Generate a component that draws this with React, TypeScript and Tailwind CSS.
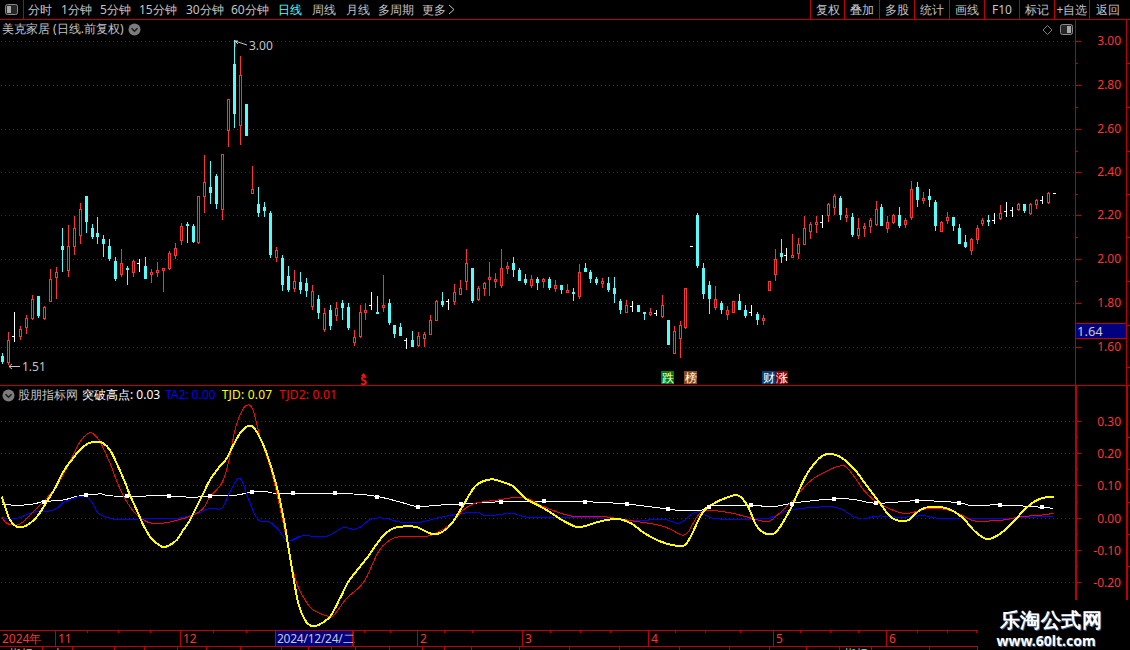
import React from "react";

type C = [number, number, number, number, number, "r" | "c" | "w"];

const candles: C[] = [
  [2,353,364,356,362,"c"],[8,332,365,340,363,"r"],[14,312,342,336,0,"w"],[20,326,340,329,337,"r"],[26,315,334,318,328,"r"],
  [32,295,320,299,319,"r"],[38,296,318,296,316,"c"],[44,306,320,307,319,"r"],[50,269,302,279,302,"r"],[56,267,299,272,278,"r"],
  [62,228,272,246,250,"c"],[68,225,277,246,271,"r"],[74,216,255,228,247,"r"],[80,203,244,209,236,"r"],[86,196,233,196,222,"c"],
  [92,224,239,228,237,"c"],[97,217,244,233,237,"c"],[103,235,257,239,244,"c"],[109,239,261,246,259,"c"],[115,257,281,261,279,"c"],
  [121,249,277,263,275,"r"],[127,266,285,268,270,"c"],[133,260,277,261,273,"r"],[139,259,272,263,0,"w"],[145,257,279,266,279,"c"],
  [151,269,283,272,275,"r"],[157,262,277,270,273,"r"],[163,268,292,268,271,"r"],[169,251,270,253,269,"r"],[175,243,259,248,256,"r"],
  [181,223,245,226,241,"r"],[187,222,243,224,226,"c"],[193,224,243,226,242,"c"],[198,196,244,196,243,"r"],[204,155,213,182,197,"r"],
  [210,161,204,187,193,"c"],[216,174,209,176,204,"c"],[222,154,220,154,210,"r"],[228,99,147,99,131,"r"],[234,40,128,64,114,"c"],
  [240,56,145,75,126,"r"],[246,104,136,104,136,"c"],[252,166,194,189,194,"r"],[258,187,217,204,213,"c"],[264,202,217,207,211,"c"],
  [270,211,258,213,255,"c"],[276,247,262,250,258,"r"],[282,255,291,258,285,"c"],[288,266,292,276,290,"c"],[294,270,292,281,289,"r"],
  [300,272,294,282,290,"c"],[306,278,297,283,291,"c"],[312,285,310,291,307,"r"],[318,295,319,299,313,"c"],[324,308,332,313,330,"r"],
  [330,305,330,310,326,"c"],[336,302,321,308,316,"r"],[342,300,320,303,308,"c"],[348,303,330,307,328,"c"],[354,330,346,337,343,"r"],
  [360,305,338,312,337,"r"],[365,303,320,310,313,"r"],[371,292,310,305,0,"w"],[377,296,314,312,314,"c"],[383,275,312,305,308,"r"],
  [389,299,325,303,323,"c"],[394,325,338,325,334,"c"],[400,323,336,327,336,"c"],[406,338,349,340,0,"w"],[412,331,347,340,347,"c"],
  [418,332,347,336,346,"r"],[424,332,347,334,339,"r"],[430,315,335,320,335,"r"],[436,300,321,301,321,"r"],[442,292,307,301,305,"c"],
  [448,299,310,301,0,"w"],[454,284,305,292,302,"r"],[460,280,295,288,295,"r"],[466,249,290,263,282,"r"],[472,268,303,268,301,"c"],
  [478,286,301,288,300,"r"],[484,282,296,283,289,"r"],[489,262,296,277,280,"r"],[495,273,288,279,282,"r"],[501,249,288,268,286,"r"],
  [507,262,274,266,269,"r"],[513,257,277,263,270,"c"],[519,268,281,270,281,"c"],[525,274,285,279,283,"c"],[531,275,288,279,286,"r"],
  [537,277,290,279,283,"c"],[543,278,288,279,282,"r"],[549,277,290,279,288,"c"],[555,280,292,285,289,"r"],[561,285,294,285,290,"c"],
  [567,284,293,290,293,"r"],[573,288,301,292,294,"c"],[579,264,299,272,297,"r"],[585,263,272,268,272,"c"],[590,270,283,272,279,"c"],
  [596,277,285,279,283,"c"],[602,278,288,281,284,"r"],[608,277,292,283,290,"c"],[614,277,303,288,294,"c"],[620,299,314,301,310,"c"],
  [626,300,313,305,313,"r"],[632,301,312,306,0,"w"],[638,305,312,305,312,"c"],[644,312,320,312,314,"c"],[650,308,316,312,315,"r"],
  [656,310,316,313,0,"w"],[662,295,318,305,317,"r"],[668,320,345,320,345,"c"],[674,326,354,331,354,"r"],[680,321,358,325,339,"r"],
  [685,288,329,288,328,"r"],[697,213,268,215,266,"c"],[703,263,299,268,294,"c"],[709,281,314,285,299,"c"],[715,286,310,299,308,"r"],
  [721,301,314,303,310,"c"],[727,306,320,310,315,"r"],[733,301,313,301,313,"r"],[739,294,310,301,310,"c"],[745,305,318,310,316,"c"],
  [751,305,316,312,0,"w"],[757,312,325,314,320,"c"],[763,315,325,318,321,"r"],[769,281,291,281,291,"r"],[775,249,281,259,275,"r"],
  [781,239,263,253,257,"c"],[786,248,261,255,0,"w"],[792,234,258,255,258,"r"],[798,238,259,244,254,"r"],[804,216,245,228,245,"r"],
  [810,222,239,224,232,"r"],[816,216,233,222,225,"r"],[822,215,228,222,0,"w"],[828,203,222,204,216,"r"],[834,194,215,196,208,"r"],
  [840,196,220,198,215,"c"],[846,208,222,215,218,"r"],[852,213,237,217,235,"c"],[858,218,239,228,236,"r"],[864,223,237,226,229,"r"],
  [870,218,233,220,227,"r"],[876,201,226,209,225,"r"],[881,204,226,207,226,"c"],[887,216,233,222,229,"r"],[893,214,224,215,223,"r"],
  [899,207,228,215,226,"c"],[905,218,228,220,225,"r"],[911,181,220,189,218,"r"],[917,182,207,187,200,"c"],[923,192,204,198,201,"r"],
  [929,189,207,196,200,"c"],[935,200,231,202,226,"c"],[941,221,232,222,232,"r"],[947,212,224,217,221,"r"],[953,217,231,217,226,"c"],
  [959,224,244,228,244,"c"],[965,235,248,242,247,"c"],[971,238,255,239,251,"r"],[977,225,244,228,240,"r"],[982,218,226,220,224,"r"],
  [988,215,226,220,222,"c"],[994,213,224,220,0,"w"],[1000,205,220,213,219,"r"],[1006,202,217,211,0,"w"],[1012,207,217,210,0,"w"],
  [1018,203,211,204,210,"r"],[1024,204,213,204,211,"c"],[1030,203,215,204,214,"r"],[1036,199,209,200,205,"r"],[1042,196,204,200,0,"w"],
  [1048,192,204,193,203,"r"],
];

type P = [number, number];
const a = (pts: number[][]): P[] => pts.map(([x, y]) => [x / 3, 400 + y / 3]);
const b = (pts: number[][]): P[] => pts.map(([x, y]) => [360 + x / 2.178, 420 + y / 3]);

const yellow: P[] = [
  ...a([[5,290],[15,320],[30,360],[50,380],[70,380],[90,370],[115,345],[140,305],[165,265],[190,215],[215,180],[240,150],[265,130],[290,125],[310,130],[330,150],[350,190],[370,235],[390,285],[410,330],[430,375],[450,410],[470,430],[490,441],[510,435],[530,420],[550,390],[570,360],[590,320],[610,280],[630,240],[655,205],[680,175],[700,135],[720,100],[740,80],[755,78],[770,95],[790,135],[810,190],[830,260],[850,350],[865,440],[880,530],[895,610],[915,660],[935,678],[955,675],[990,650],[1020,595],[1045,545],[1060,525]]),
  ...b([[0,440],[20,405],[40,365],[60,335],[80,322],[120,320],[140,332],[160,343],[180,335],[200,310],[225,255],[250,200],[270,183],[290,178],[310,186],[335,200],[360,235],[400,265],[440,300],[470,320],[490,318],[520,305],[560,297],[590,310],[620,340],[650,362],[680,375],[705,377],[720,350],[745,280],[765,255],[800,232],[825,227],[845,260],[865,320],[890,343],[910,330],[940,260],[970,170],[1000,115],[1020,102],[1045,110],[1075,145],[1100,190],[1130,245],[1155,290],[1175,303],[1195,300],[1220,270],[1245,260],[1280,266],[1310,290],[1340,335],[1365,357],[1390,345],[1420,310],[1450,265],[1475,240],[1495,232],[1512,230]]),
];
const red: P[] = [
  ...a([[5,350],[20,370],[50,375],[70,365],[100,335],[130,305],[165,265],[200,205],[240,125],[265,100],[278,100],[300,125],[330,190],[355,255],[380,305],[410,345],[440,365],[460,370],[500,368],[540,358],[580,345],[610,325],[630,290],[665,250],[685,190],[705,90],[722,40],[740,16],[758,28],[780,110],[810,200],[830,280],[850,370],[870,470],[890,550],[915,600],[940,630],[990,650],[1010,635],[1040,595]]),
  ...b([[0,500],[15,470],[40,395],[60,365],[85,350],[140,350],[165,340],[195,315],[225,270],[250,250],[300,240],[340,232],[365,235],[400,260],[460,288],[530,290],[590,302],[650,315],[680,330],[700,345],[715,335],[745,275],[800,277],[840,290],[885,305],[905,290],[940,245],[975,190],[1000,165],[1045,138],[1065,150],[1100,215],[1130,250],[1185,280],[1240,265],[1280,270],[1310,285],[1340,303],[1400,300],[1440,290],[1480,286],[1510,280]]),
];
const blue: P[] = [
  ...a([[5,355],[50,355],[100,337],[140,335],[170,325],[190,307],[210,300],[235,290],[260,292],[275,305],[295,340],[330,355],[365,360],[410,357],[440,355],[530,355],[580,345],[630,325],[665,325],[690,275],[720,235],[750,310],[775,360],[810,367],[835,390],[865,423],[905,408],[965,410],[990,405],[1030,383],[1060,388]]),
  ...b([[0,322],[25,297],[55,295],[90,307],[130,307],[175,292],[235,278],[260,278],[275,288],[330,280],[365,292],[450,292],[540,295],[600,302],[660,298],[695,310],[720,285],[740,275],[775,296],[880,296],[900,290],[930,272],[990,262],[1040,263],[1075,290],[1095,297],[1130,288],[1180,292],[1225,287],[1260,295],[1340,295],[1400,296],[1510,288]]),
];
const white: P[] = [
  ...a([[5,313],[55,316],[100,312],[130,305],[190,300],[225,290],[260,285],[305,282],[340,288],[510,288],[575,292],[630,288],[710,285],[760,275],[800,275],[835,280],[1060,282]]),
  ...b([[0,223],[40,230],[85,245],[125,260],[165,256],[220,252],[310,245],[400,243],[490,245],[580,252],[670,267],[700,272],[745,270],[765,258],[850,256],[900,260],[940,250],[1000,240],[1035,237],[1075,238],[1125,250],[1215,242],[1305,248],[1330,256],[1395,255],[1487,262],[1510,266]]),
];
const squares: P[] = [
  ...a([[132,306],[259,285],[381,288],[508,288],[631,288],[757,276],[880,279],[1006,279]]),
  ...b([[38,230],[127,261],[219,252],[308,245],[400,243],[491,246],[581,252],[671,267],[760,262],[852,256],[941,252],[1033,237],[1124,250],[1214,243],[1305,249],[1394,255],[1486,261]]),
];

function smooth(p: P[]): string {
  let d = `M${p[0][0].toFixed(1)} ${p[0][1].toFixed(1)}`;
  for (let i = 0; i < p.length - 1; i++) {
    const p0 = p[Math.max(0, i - 1)], p1 = p[i], p2 = p[i + 1], p3 = p[Math.min(p.length - 1, i + 2)];
    const c1x = p1[0] + (p2[0] - p0[0]) / 6, c1y = p1[1] + (p2[1] - p0[1]) / 6;
    const c2x = p2[0] - (p3[0] - p1[0]) / 6, c2y = p2[1] - (p3[1] - p1[1]) / 6;
    d += `C${c1x.toFixed(1)} ${c1y.toFixed(1)} ${c2x.toFixed(1)} ${c2y.toFixed(1)} ${p2[0].toFixed(1)} ${p2[1].toFixed(1)}`;
  }
  return d;
}

const priceAxis: [string, number][] = [["3.00",41],["2.80",85],["2.60",129],["2.40",172],["2.20",215],["2.00",259],["1.80",303],["1.60",347]];
const indAxis: [string, number][] = [["0.30",421],["0.20",453],["0.10",485],["0.00",518],["-0.10",550],["-0.20",582]];

const CYAN = "#54fcfc", RED = "#ff3232";

const dotXs = Array.from({ length: 269 }, (_, i) => 1 + i * 4);

function Dots({ y }: { y: number }) {
  return <>{dotXs.map((x) => <rect key={x} x={x} y={y} width="1" height="1" fill="#a00000" />)}</>;
}

function Candle({ c }: { c: C }) {
  const [x, hi, lo, top, bot, t] = c;
  if (t === "w") {
    return (
      <g fill="#ffffff">
        <rect x={x} y={hi} width={1} height={lo - hi} />
        <rect x={x - 2} y={top} width={2} height={1} />
      </g>
    );
  }
  if (t === "c") {
    return (
      <g fill={CYAN}>
        <rect x={x} y={hi} width={1} height={lo - hi} />
        <rect x={x - 1} y={top} width={3} height={bot - top} />
      </g>
    );
  }
  return (
    <g>
      <rect x={x} y={hi} width={1} height={lo - hi} fill={RED} />
      <rect x={x - 0.5} y={top + 0.5} width={2} height={Math.max(1, bot - top - 1)} fill="#000" stroke={RED} strokeWidth={1} />
    </g>
  );
}

function CircleChevron() {
  return (
    <svg width="13" height="13" viewBox="0 0 13 13" className="shrink-0">
      <circle cx="6.5" cy="6.5" r="6" fill="#7c7c7c" />
      <path d="M3.5 5.2 L6.5 8.2 L9.5 5.2" fill="none" stroke="#1c1c1c" strokeWidth="1.6" />
    </svg>
  );
}

function PanelIcon({ side }: { side: "l" | "r" }) {
  return (
    <svg width="13" height="11" viewBox="0 0 13 11">
      <rect x="0.5" y="0.5" width="12" height="10" rx="2" fill="#262626" stroke="#8a8a8a" />
      <rect x={side === "l" ? 2 : 7} y="2" width="4" height="7" fill="#a8a8a8" />
    </svg>
  );
}

const periods: [string, string][] = [["分时","w-[33px]"],["1分钟","w-[39px]"],["5分钟","w-[39px]"],["15分钟","w-[47px]"],["30分钟","w-[45px]"],["60分钟","w-[47px]"],["日线","w-[34px] text-[#54fcfc]"],["周线","w-[34px]"],["月线","w-[32px]"],["多周期","w-[44px]"]];
const tools: [string, string][] = [["复权","w-[34px]"],["叠加","w-[35px]"],["多股","w-[35px]"],["统计","w-[35px]"],["画线","w-[35px]"],["F10","w-[35px]"],["标记","w-[35px]"],["+自选","w-[35px]"],["返回","w-[41px] pr-[4px]"]];

function Axis({ ticks, top, height, thick, dy }: { ticks: [string, number][]; top: number; height: number; thick?: boolean; dy: number }) {
  const w = thick ? 2 : 1;
  return (
    <svg width="55" height={height} viewBox={`1075 ${top} 55 ${height}`} className="shrink-0 block" shapeRendering="crispEdges">
      <rect x="1075" y={top} width={w} height={height} fill="#c00000" />
      <rect x="1126" y={top} width={w} height={height} fill="#c00000" />
      {ticks.map(([l, y], i) => (
        <g key={l}>
          <rect x="1075" y={y} width="6" height="1" fill="#c00000" />
          {i < ticks.length - 1 && <rect x="1075" y={Math.round((y + ticks[i + 1][1]) / 2)} width="3" height="1" fill="#c00000" />}
          <rect x="1127" y={Math.round((y + (ticks[i + 1]?.[1] ?? y + 40)) / 2)} width="3" height="1" fill="#c00000" />
          <text x="1121" y={y + dy} textAnchor="end" fill={RED} className="text-[12px]">{l}</text>
        </g>
      ))}
    </svg>
  );
}

const dateSegs: [string, string, string][] = [
  ["2024年","w-[55px] pl-[2px]","text-[#ff3232]"],["11","w-[125px] pl-[2px]","text-[#ff3232]"],["12","w-[95px] pl-[2px]","text-[#ff3232]"],
  ["2024/12/24/二","w-[78px] bg-[#000080] border-r border-[#c00000] pl-[1px] tracking-[-0.25px]","text-[#c8c8c8]"],["","w-[64px]",""],
  ["2","w-[105px] pl-[2px]","text-[#ff3232]"],["3","w-[126px] pl-[2px]","text-[#ff3232]"],["4","w-[125px] pl-[2px]","text-[#ff3232]"],["5","w-[113px] pl-[2px]","text-[#ff3232]"],["6","w-[244px] pl-[2px]","text-[#ff3232]"],
];
const dateTicks = [87,118,150,213,246,364,390,444,472,550,580,610,675,705,740,800,830,858,917,947,976];
const tabs: [number, string, string][] = [
  [43,"指标",""],[30,"上",""],[42,"",""],[30,"",""],[33,"",""],[29,"",""],[34,"",""],[41,"",""],[27,"",""],[23,"",""],[24,"",""],[34,"",""],[33,"",""],[22,"",""],[27,"",""],
  [48,"",""],[50,"",""],[50,"",""],[60,"",""],[50,"",""],[40,"",""],[37,"",""],[33,"",""],[32,"指标","text-[#54fcfc]"],[58,"",""],[48,"",""],
];

function Sign({ ch, bg }: { ch: string; bg: string }) {
  return <span className={`w-[13px] h-[13px] flex items-center justify-center text-white text-[12px] leading-none ${bg}`}>{ch}</span>;
}

export default function App() {
  return (
    <div className="relative w-[1130px] h-[650px] bg-black overflow-hidden flex flex-col font-['Liberation_Sans','Noto_Sans_CJK_SC',sans-serif] text-[12px] text-[#c4c4c4]">
      {/* toolbar */}
      <div className="h-[20px] shrink-0 flex items-center border-b border-[#c00000]">
        <div className="w-[24px] h-full flex items-center justify-center border-r border-[#c00000]">
          <PanelIcon side="l" />
        </div>
        <div className="flex items-center pl-[4px] leading-none">
          {periods.map(([p, w]) => (
            <span key={p} className={`${w} whitespace-nowrap`}>{p}</span>
          ))}
          <span className="flex items-center gap-[2px] whitespace-nowrap">更多
            <svg width="7" height="11" viewBox="0 0 7 11"><path d="M1 1 L6 5.5 L1 10" fill="none" stroke="#c4c4c4" /></svg>
          </span>
        </div>
        <div className="ml-auto flex h-full">
          {tools.map(([t, w]) => (
            <div key={t} className={`${w} h-full flex items-center justify-center border-l border-[#c00000] whitespace-nowrap`}>{t}</div>
          ))}
        </div>
      </div>

      {/* main panel */}
      <div className="relative h-[366px] shrink-0 flex border-b border-[#c00000]">
        <svg width="1075" height="365" viewBox="0 20 1075 365" className="shrink-0 block">
          <g shapeRendering="crispEdges">
            {priceAxis.map(([l, y]) => <Dots key={l} y={y} />)}
            {candles.map((c, i) => <Candle key={i} c={c} />)}
            <rect x="690" y="246" width="3" height="1" fill="#fff" />
            <rect x="1053" y="193" width="3" height="1" fill="#fff" />
          </g>
          <path d="M235 47 V41 H238 M235 41 L247 45 M238 44 L235 41" fill="none" stroke="#c4c4c4" />
          <text x="249" y="50" fill="#c4c4c4" className="text-[12px]">3.00</text>
          <path d="M20 366.5 H9 M9 366.5 L12 364 M9 366.5 L12 369" fill="none" stroke="#c4c4c4" />
          <text x="22" y="371" fill="#c4c4c4" className="text-[12px]">1.51</text>
          <path d="M1043 30 L1047.5 25.5 L1052 30 L1047.5 34.5 Z" fill="none" stroke="#7c7c7c" />
        </svg>
        <Axis ticks={priceAxis} top={20} height={365} dy={4} />

        <div className="absolute left-[2px] top-[0px] flex items-center gap-[4px] leading-[18px]">
          <span>美克家居 (日线.前复权)</span>
          <CircleChevron />
        </div>
        <div className="absolute left-[1060px] top-[4px]"><PanelIcon side="r" /></div>
        <div className="absolute left-[360px] top-[353px] flex flex-col items-center w-[7px]">
          <svg width="7" height="3" viewBox="0 0 7 3" className="block"><path d="M3.5 0 L6 3 H1 Z" fill="#ff1010" /></svg>
          <span className="text-[#ff1010] text-[12px] leading-[9px] font-bold">S</span>
        </div>
        <div className="absolute left-[661px] top-[351px]"><Sign ch="跌" bg="bg-[#008000]" /></div>
        <div className="absolute left-[684px] top-[351px]"><Sign ch="榜" bg="bg-[#8a4a10]" /></div>
        <div className="absolute left-[762px] top-[351px] flex">
          <Sign ch="财" bg="bg-[#004080]" />
          <Sign ch="涨" bg="bg-[#800000]" />
        </div>
        <div className="absolute right-[4px] top-[303px] w-[50px] h-[16px] bg-[#000080] border-y border-[#c00000] text-[#c8c8c8] leading-[14px] pl-[1px] text-[13px]">1.64</div>
      </div>

      {/* indicator panel */}
      <div className="relative h-[244px] shrink-0 flex">
        <svg width="1075" height="244" viewBox="0 386 1075 244" className="shrink-0 block">
          <g shapeRendering="crispEdges">
            {indAxis.map(([l, y]) => <Dots key={l} y={y} />)}
            <path d={smooth(white)} fill="none" stroke="#ffffff" strokeWidth="1" />
            <path d={smooth(blue)} fill="none" stroke="#0000ff" strokeWidth="1" />
            <path d={smooth(red)} fill="none" stroke="#ff0000" strokeWidth="1" />
            <path d={smooth(yellow)} fill="none" stroke="#ffff00" strokeWidth="2" />
            {squares.map(([x, y], i) => (
              <rect key={i} x={Math.round(x) - 2} y={Math.round(y) - 2} width="4" height="4" fill="#ffffff" />
            ))}
          </g>
        </svg>
        <Axis ticks={indAxis} top={386} height={244} thick dy={5} />
        <div className="absolute left-[2px] top-[2px] flex items-center leading-[14px] whitespace-nowrap">
          <CircleChevron />
          <span className="ml-[3px]">股朋指标网</span>
          <span className="ml-[4px] text-white">突破高点: 0.03</span>
          <span className="ml-[5px] text-[#0000ff]">TA2: 0.00</span>
          <span className="ml-[6px] tracking-[0.2px] text-[#ffff00]">TJD: 0.07</span>
          <span className="ml-[7px] tracking-[0.2px] text-[#ff0000]">TJD2: 0.01</span>
        </div>
      </div>

      {/* date bar */}
      <div className="relative h-[17px] shrink-0 flex border-y border-[#c00000]">
        {dateSegs.map(([t, w, c], i) => (
          <div key={i} className={`${w} h-full shrink-0 whitespace-nowrap leading-[15px] ${i > 0 ? "border-l border-[#c00000]" : ""} ${c}`}>{t}</div>
        ))}
        <svg className="absolute left-0 top-0" width="980" height="3" viewBox="0 0 980 3" shapeRendering="crispEdges">
          {dateTicks.map((x) => <rect key={x} x={x} y="0" width="1" height="2" fill="#c00000" />)}
        </svg>
      </div>

      {/* tab row, cut off by the bottom of the window */}
      <div className="flex-1 flex overflow-hidden leading-[14px]">
        {tabs.map(([w, t, c], i) => (
          <div key={i} style={{ width: w }} className={`shrink-0 border-r border-[#c00000] text-center whitespace-nowrap ${c}`}>{t}</div>
        ))}
      </div>

      {/* watermark */}
      <div className="absolute left-[978px] top-[600px] w-[152px] h-[50px] bg-black flex flex-col items-center pt-[8px]">
        <span className="text-white font-bold text-[20px] leading-[24px] tracking-[0.5px] [text-shadow:1px_1px_0_#3a5a8a] -ml-[6px]">乐淘公式网</span>
        <span className="text-white font-bold text-[14px] leading-[16px] font-['Liberation_Serif',serif] [text-shadow:1px_1px_0_#3a5a8a] -ml-[16px] mt-[1px]">www.60lt.com</span>
      </div>
    </div>
  );
}
